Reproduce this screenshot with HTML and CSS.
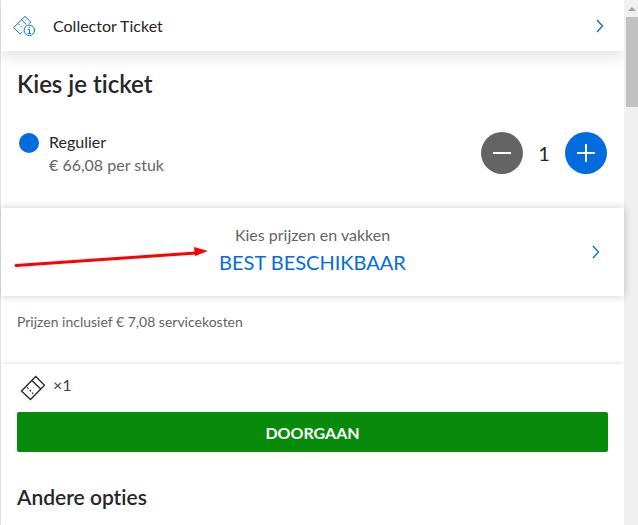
FILE: index.html
```html
<!DOCTYPE html>
<html lang="nl">
<head>
    <meta charset="UTF-8">
    <meta name="viewport" content="width=device-width, initial-scale=1.0">
    <title>Kies je ticket</title>
    <link rel="stylesheet" href="styles.css">
</head>
<body>

    <main class="panel">
        <a href="#" class="event-bar">
            <svg class="event-icon" width="24" height="22" viewBox="0 0 24 22">
                <path d="M10.5 16.8 L8.2 19 L1.6 12.6 L13 1.4 L18.8 7 L17 8.8" />
                <path d="M9.6 4.8 L12.8 8 L14.2 9.4" />
                <path d="M6.4 8.8 L7.6 10 M8.8 11.2 L10 12.4" />
                <circle cx="17.3" cy="15.3" r="5.2" />
                <path d="M17.3 11.6 V13 M15.8 14.4 H17.5 V18.4 M15.8 18.4 H19" />
            </svg>
            <span class="event-name">Collector Ticket</span>
            <svg class="chevron" width="8" height="14" viewBox="0 0 8 14"><path d="M1 1 L6.5 7 L1 13" /></svg>
        </a>

        <section class="tickets">
            <h1>Kies je ticket</h1>
            <div class="ticket-row">
                <span class="dot"></span>
                <div class="ticket-info">
                    <p class="ticket-name">Regulier</p>
                    <p class="ticket-price">€ 66,08 per stuk</p>
                </div>
                <div class="stepper">
                    <button class="round-btn minus" id="minus" aria-label="Minder">
                        <svg width="18" height="18" viewBox="0 0 18 18"><path d="M0 9 H18" /></svg>
                    </button>
                    <span class="count" id="count">1</span>
                    <button class="round-btn plus" id="plus" aria-label="Meer">
                        <svg width="18" height="18" viewBox="0 0 18 18"><path d="M0 9 H18 M9 0 V18" /></svg>
                    </button>
                </div>
            </div>
        </section>

        <a href="#" class="price-picker">
            <span class="picker-text">
                <span class="picker-label">Kies prijzen en vakken</span>
                <span class="picker-value">BEST BESCHIKBAAR</span>
            </span>
            <svg class="chevron" width="8" height="14" viewBox="0 0 8 14"><path d="M1 1 L6.5 7 L1 13" /></svg>
            <svg class="pointer" width="196" height="24" viewBox="0 0 196 24">
                <path class="pointer-line" d="M2 18.5 L182 6" />
                <path class="pointer-head" d="M180 0 L194 4 L181 9 Z" />
            </svg>
        </a>

        <p class="fees">Prijzen inclusief € 7,08 servicekosten</p>

        <section class="checkout">
            <div class="summary">
                <svg class="ticket-icon" width="26" height="26" viewBox="0 0 26 26">
                    <path d="M1.5 16 L15.7 1.5 L24.5 10.2 L10.5 24.5 Z" />
                    <path d="M11.8 5.6 L20.8 14" />
                    <path d="M7.2 12.4 L8.4 13.6 M9.8 15 L10.8 16.4 M12 17.6 L13.2 18.8" />
                </svg>
                <span>×<span id="total">1</span></span>
            </div>
            <button class="continue">DOORGAAN</button>
            <h2>Andere opties</h2>
        </section>
    </main>

    <div class="scrollbar">
        <span class="scroll-up"></span>
        <span class="scroll-thumb"></span>
    </div>

    <script>
        let count = 1;

        function setCount(value) {
            count = Math.max(0, value);
            document.getElementById('count').textContent = count;
            document.getElementById('total').textContent = count;
        }

        document.getElementById('minus').addEventListener('click', () => setCount(count - 1));
        document.getElementById('plus').addEventListener('click', () => setCount(count + 1));
    </script>

</body>
</html>
```
FILE: styles.css
```css
* {
    box-sizing: border-box;
    margin: 0;
    padding: 0;
}
body {
    display: flex;
    min-height: 100vh;
    background-color: #fff;
    color: #262626;
    font-family: Lato, 'Open Sans', sans-serif;
    font-size: 16px;
    font-variant-ligatures: none;
    line-height: 23px;
}
a {
    color: inherit;
    text-decoration: none;
}
button {
    border: none;
    color: #fff;
    font-family: inherit;
    cursor: pointer;
}
svg {
    display: block;
    flex: none;
    fill: none;
    stroke: currentColor;
}
.panel {
    flex: 1;
    min-width: 0;
    border-left: 1px solid #e4e4e4;
}
.event-bar {
    display: flex;
    align-items: center;
    height: 51px;
    padding: 0 20px 0 11px;
    box-shadow: 0 4px 16px rgba(0, 0, 0, 0.14);
}
.event-icon {
    margin-right: 17px;
    color: #026cdf;
}
.event-name {
    flex: 1;
}
.chevron {
    color: #026cdf;
    stroke-width: 1.3;
}
.tickets {
    padding: 17px 16px 32px;
}
h1 {
    font-size: 24px;
    font-weight: 600;
    line-height: 32px;
}
.ticket-row {
    display: flex;
    align-items: flex-start;
    margin-top: 30px;
    padding-right: 1px;
}
.dot {
    width: 20px;
    height: 20px;
    margin: 3px 10px 0 2px;
    border-radius: 50%;
    background-color: #026cdf;
}
.ticket-info {
    flex: 1;
}
.ticket-price {
    color: #646464;
}
.stepper {
    display: flex;
    align-items: center;
    margin-top: 2px;
}
.round-btn {
    display: flex;
    align-items: center;
    justify-content: center;
    width: 42px;
    height: 42px;
    border-radius: 50%;
    stroke-width: 2;
}
.minus {
    background-color: #646464;
}
.plus {
    background-color: #026cdf;
}
.count {
    width: 42px;
    font-size: 20px;
    text-align: center;
}
.price-picker {
    position: relative;
    display: flex;
    align-items: center;
    height: 88px;
    padding-right: 24px;
    box-shadow: 0 0 8px rgba(0, 0, 0, 0.22);
}
.picker-text {
    flex: 1;
    padding: 0 0 3px 32px;
    text-align: center;
}
.picker-label,
.picker-value {
    display: block;
}
.picker-label {
    color: #646464;
}
.picker-value {
    color: #026cdf;
    font-size: 20px;
    line-height: 32px;
}
.pointer {
    position: absolute;
    top: 39px;
    left: 13px;
}
.pointer-line {
    stroke: #f00;
    stroke-width: 3;
    stroke-linecap: round;
}
.pointer-head {
    fill: #f00;
    stroke: none;
}
.fees {
    padding: 14px 16px 31px;
    color: #646464;
    font-size: 14px;
}
.checkout {
    padding: 9px 16px 12px;
    box-shadow: 0 -2px 4px -1px rgba(0, 0, 0, 0.12);
}
.summary {
    display: flex;
    gap: 7px;
    padding-left: 3px;
    color: #414141;
}
.ticket-icon {
    margin-top: 2px;
    color: #262626;
    stroke-width: 1.3;
}
.continue {
    display: block;
    width: 100%;
    height: 40px;
    margin-top: 11px;
    border-radius: 2px;
    background-color: #088a0b;
    font-size: 16px;
    font-weight: 700;
}
h2 {
    margin-top: 31px;
    font-size: 21px;
    font-weight: 600;
    line-height: 28px;
}
.scrollbar {
    flex: none;
    width: 14px;
    padding: 7px 0 0 2px;
    background-color: #f0f0f0;
}
.scroll-up {
    display: block;
    width: 8px;
    margin-left: 2px;
    border: 4px solid transparent;
    border-top: none;
    border-bottom-color: #a3a3a3;
}
.scroll-thumb {
    display: block;
    height: 90px;
    margin-top: 6px;
    background-color: #c1c1c1;
}
```
